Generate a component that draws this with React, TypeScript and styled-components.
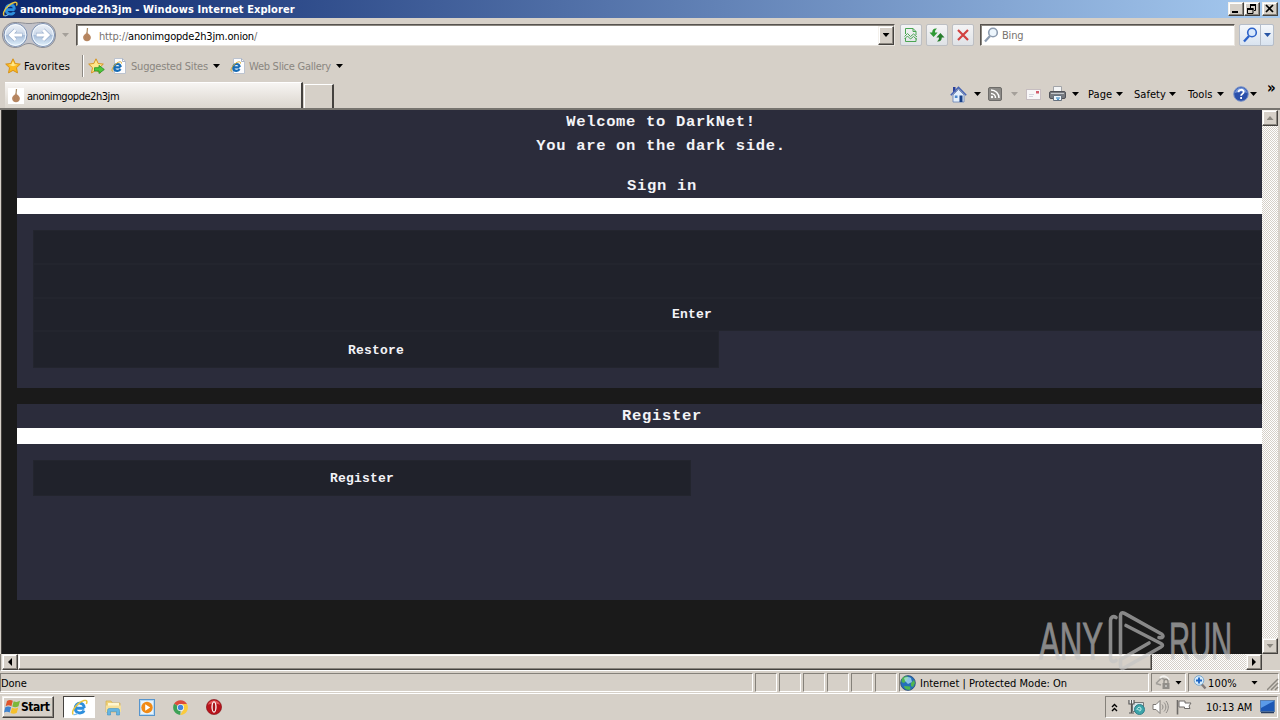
import React from 'react';
import styled, { createGlobalStyle, css } from 'styled-components';

const face = '#d6d0c8';
const uiFont = '"DejaVu Sans Condensed", "DejaVu Sans", "Liberation Sans", sans-serif';

const raised = css`
  border: 1px solid;
  border-color: #f4f1ec #45423f #45423f #f4f1ec;
  box-shadow: inset -1px -1px 0 #8b8780, inset 1px 1px 0 #fff;
`;

const sunken = css`
  border: 1px solid;
  border-color: #85817a #fff #fff #85817a;
`;

const IeIcon = ({ size = 16 }: { size?: number }) => (
  <svg width={size} height={size} viewBox="0 0 16 16" fill="none">
    <path d="M12.6 8.6H4.4M12.4 8.4C12.4 5.7 10.7 4 8.4 4 5.8 4 4 6 4 8.6c0 2.7 1.8 4.5 4.4 4.5 1.9 0 3.3-.9 3.8-2.2" stroke="#2d8fdd" strokeWidth="2.8" />
    <path d="M5.4 6.5c.7-1.2 1.7-1.7 2.9-1.7" stroke="#9bd6fa" strokeWidth="1" />
    <path d="M2.3 14.6C.2 13 2.6 8 7 4.300 10.800 1.200 14.500.500 14.900 2.200c.2.700 0 1.600-.5 2.500" stroke="#e9c43e" strokeWidth="1.400" />
    <path d="M2.3 14.6c.9.500 2.500-.1 4.100-1.100" stroke="#7cbcf0" strokeWidth="1.200" />
  </svg>
);

const IePageIcon = () => (
  <svg width="16" height="16" viewBox="0 0 16 16" fill="none">
    <path d="M3.500.500h8l3 3v12h-11z" fill="#fdfdff" stroke="#bcc3cf" />
    <path d="M11.500.500v3h3" stroke="#a9b3c4" />
    <path d="M9.500 9.300H3.300M9.700 9C9.500 6.800 8.200 6 6.500 6 4.700 6 3.200 7.500 3.200 9.400c0 2 1.400 3.400 3.300 3.400 1.400 0 2.500-.6 3-1.700" stroke="#176cb5" strokeWidth="2.200" />
    <path d="M1.500 13.500C-.2 12 2.500 7.500 6 5c2.500-1.700 5-1.700 4.500.5" stroke="#d9a927" />
  </svg>
);

const OnionIcon = () => (
  <svg width="16" height="16" viewBox="0 0 16 16">
    <rect width="16" height="16" fill="#fff" />
    <path d="M8.500 1 8 6" stroke="#a68a63" strokeWidth="1.200" />
    <path d="M8 5c.6 1.600 3.900 2.600 3.900 5.600 0 2.200-1.700 3.700-3.900 3.700s-3.900-1.500-3.900-3.700C4.100 7.600 7.400 6.600 8 5Z" fill="#b98a66" />
    <path d="M6.300 8.500v4.500M8 7v7M9.800 8.500v4.500" stroke="#a8764f" strokeWidth=".5" />
  </svg>
);

const StarIcon = ({ add }: { add?: boolean }) => (
  <svg width="17" height="16" viewBox="0 0 17 16">
    <path d="m8 .8 2.200 4.700 5.100.6-3.800 3.600 1 5.200L8 12.400l-4.500 2.500 1-5.200L.7 6.100l5.100-.6z" fill={add ? '#fbe58c' : '#fcb91f'} stroke="#d48c12" strokeWidth=".9" />
    <path d="m8 2.900 1.500 3.300 3.200.5-4.700 1.500-4.500-1.500 3-.5z" fill="#ffe88a" />
    {add && <path d="M6.500 9.700h4.500V7.400l5.300 4.100-5.300 4V13H6.500z" fill="#4fc73c" stroke="#238f22" strokeWidth=".8" />}
  </svg>
);

const NavIcon = () => (
  <svg width="58" height="30" viewBox="0 0 58 30" fill="none">
    <defs>
      <linearGradient id="orb" x1="0" y1="0" x2="0" y2="1">
        <stop offset="0" stopColor="#eef2f8" />
        <stop offset=".48" stopColor="#cbd8e9" />
        <stop offset=".52" stopColor="#a9bfdb" />
        <stop offset="1" stopColor="#e4f3fd" />
      </linearGradient>
    </defs>
    <path d="M15 2.500c8 0 8 1 14 1s6-1 14-1c7 0 12.500 5 12.500 12.500S50 27.500 43 27.500c-7 0-8-4-14-4s-7 4-14 4C8 27.500 2.500 22 2.500 15S8 2.500 15 2.500Z" fill="#c3c3c9" stroke="#8c8e96" />
    <circle cx="15.500" cy="15" r="11.500" fill="url(#orb)" stroke="#7d91b2" />
    <circle cx="43" cy="15" r="11.500" fill="url(#orb)" stroke="#7d91b2" />
    <circle cx="15.500" cy="15" r="10.300" stroke="#f4faff" />
    <circle cx="43" cy="15" r="10.300" stroke="#f4faff" />
    <path d="M22.500 15h-12M15.500 10l-5 5 5 5" stroke="#9aafcc" strokeWidth="4.300" />
    <path d="M22 15H10.500M15.500 10l-5 5 5 5" stroke="#fff" strokeWidth="3" />
    <path d="M36 15h12M43 10l5 5-5 5" stroke="#9aafcc" strokeWidth="4.300" />
    <path d="M36.500 15H48M43 10l5 5-5 5" stroke="#fff" strokeWidth="3" />
  </svg>
);

const SearchIcon = ({ color, glass }: { color: string; glass: string }) => (
  <svg width="15" height="16" viewBox="0 0 15 16" fill="none">
    <path d="m6 9-5 5.500" stroke={color} strokeWidth="2.300" />
    <circle cx="9" cy="5.500" r="4.300" fill={glass} stroke={color} strokeWidth="1.600" />
  </svg>
);

const CompatIcon = () => (
  <svg width="14" height="16" viewBox="0 0 14 16" fill="none" stroke="#4ba552">
    <path d="M1.500 7V1.500h7.500l3 3V8M9 1.500v3h3M1.500 11v3.500h10.500V11" />
    <path d="m.5 9.500 3-3 3 3 3-2.500 3.500 3M.5 12l3-3 3 3 3-2.500 3.500 3" />
  </svg>
);

const RefreshIcon = () => (
  <svg width="16" height="16" viewBox="0 0 16 16" fill="#2f9a35">
    <path d="M8 1.500C5 1 3.200 2.500 3.200 5.500H.5L4.600 10l4-4.500H6C6 3.800 6.500 2.700 8 1.500Z" />
    <path d="M8 14.500c3 .5 4.800-1 4.800-4h2.700L11.400 6l-4 4.500H10c0 1.700-.5 2.800-2 4Z" fill="#277d2c" />
  </svg>
);

const StopIcon = () => (
  <svg width="12" height="12" viewBox="0 0 12 12">
    <path d="m1 1 10 10M11 1 1 11" stroke="#d2413f" strokeWidth="2.200" />
  </svg>
);

const HomeIcon = () => (
  <svg width="17" height="17" viewBox="0 0 17 17">
    <path d="M3 1h2.500v5H3z" fill="#2a3f9a" />
    <path d="m3 9 5.500-5.500L14 9v7H3z" fill="#e3effc" stroke="#6480b4" strokeWidth=".8" />
    <path d="m.8 9.200 7.700-7.700 7.700 7.700" fill="none" stroke="#4664b4" strokeWidth="1.600" />
    <path d="M9.500 9.500h3V16h-3z" fill="#173f88" />
    <path d="M4.800 9.500h2.700V12H4.800z" fill="#4b87cc" />
  </svg>
);

const RssIcon = () => (
  <svg width="14" height="14" viewBox="0 0 14 14" fill="none">
    <rect x=".5" y=".5" width="13" height="13" rx="1.500" fill="#8c8a87" stroke="#6e6c69" />
    <path d="M3 6.500A4.500 4.500 0 0 1 7.500 11M3 3a8 8 0 0 1 8 8" stroke="#fff" strokeWidth="1.500" />
    <circle cx="4" cy="10" r="1.200" fill="#fff" />
  </svg>
);

const MailIcon = () => (
  <svg width="15" height="11" viewBox="0 0 15 11">
    <rect x=".5" y=".5" width="14" height="10" fill="#f8f7f8" stroke="#c6bdc0" />
    <path d="M10 2h3v2.500h-3z" fill="#d25c6c" />
    <path d="M3 5.500h5M3 7.500h4" stroke="#d3d3dc" />
  </svg>
);

const PrinterIcon = () => (
  <svg width="17" height="16" viewBox="0 0 17 16">
    <path d="M4.500.500h8v6h-8z" fill="#f4f5f6" stroke="#a2a4a8" />
    <rect x=".5" y="5.500" width="16" height="7" rx="1.500" fill="#787b80" stroke="#505258" />
    <path d="M2 7.500h13" stroke="#c4c7cb" />
    <path d="M4.500 9.500h8v5h-8z" fill="#eef5fa" stroke="#66717e" />
    <path d="M7 12h4M8 13.300h2" stroke="#2a7ebd" />
  </svg>
);

const HelpIcon = () => (
  <svg width="16" height="16" viewBox="0 0 16 16" fill="none">
    <circle cx="8" cy="8" r="7.300" fill="#2b50ab" stroke="#7d95c9" />
    <path d="M2 7c.5-7 11.500-7 12 0-4-2-8-2-12 0Z" fill="#6f92d8" />
    <path d="M5.500 6.200C5.500 3 10.700 3 10.700 6c0 1.800-2.600 2-2.600 3.800M8.100 11v2" stroke="#fff" strokeWidth="1.800" />
  </svg>
);

const GlobeIcon = () => (
  <svg width="16" height="16" viewBox="0 0 16 16">
    <circle cx="8" cy="8" r="7.400" fill="#2470ba" stroke="#27406b" strokeWidth=".7" />
    <path d="M2 3.500C4 1 7 .800 8.500 2L7 5 4 8 1.500 7zM11 8l3-3 1 3-2 4-2-1zM4 11l6 .5.500 3C6 15.500 4.500 13.500 4 11Z" fill="#4fb650" />
    <path d="M4 3c2-1.500 5-1.500 7 0l1 4-4 2-3-3z" fill="#b8e6fa" opacity=".7" />
  </svg>
);

const LockIcon = () => (
  <svg width="16" height="15" viewBox="0 0 16 15" fill="none">
    <path d="M1 8.500 6.500 3l3 1.500M1 8.500l5 1.500" stroke="#a09d98" strokeWidth="1.500" />
    <path d="M5 3c3-3 7-2 9 2" stroke="#f3f2ef" strokeWidth="2" />
    <path d="M9 8V6.500c0-3 4-3 4 0V8" stroke="#8e8b86" strokeWidth="1.300" />
    <rect x="7.500" y="8" width="7" height="6" fill="#918e89" />
    <path d="M11 10v2" stroke="#eee" />
  </svg>
);

const ZoomIcon = () => (
  <svg width="14" height="15" viewBox="0 0 14 15" fill="none">
    <path d="m8.500 9 4 4.500" stroke="#827a7a" strokeWidth="2.400" />
    <circle cx="6" cy="5.500" r="4.800" fill="#d7ecfb" stroke="#7aa7cd" />
    <path d="M6 2.500v6M3 5.500h6" stroke="#1b63c4" strokeWidth="1.800" />
  </svg>
);

const FlagLogo = () => (
  <svg width="17" height="16" viewBox="0 0 17 16">
    <path d="M3 2c2-1.500 4-1.300 5.800-.2L7.400 7.200C5.500 6 3.600 6 1.600 7.200z" fill="#e0542a" />
    <path d="M9.700 2.200c2 1 4 1 6.300-.4l-1.500 5.500c-2 1.300-4 1.400-6.200.300z" fill="#7cb83b" />
    <path d="M1.300 8.200c2-1.200 4-1 5.800.1l-1.400 5.300C4 12.500 2 12.500 0 13.500z" fill="#3f83cf" />
    <path d="M8 8.700c2 1 4 1 6.200-.3l-1.400 5.400c-2 1.300-4.200 1.300-6.300.200z" fill="#f5c02c" />
  </svg>
);

const FolderIcon = () => (
  <svg width="17" height="17" viewBox="0 0 17 17">
    <path d="M1 2h5l1.500 2H15v9H1z" fill="#efd178" stroke="#d3b050" strokeWidth=".7" />
    <path d="M3 4h11v5H3z" fill="#fff6cf" />
    <path d="M1 6.500h15V13H1z" fill="#f6e09a" />
    <path d="M2.500 16v-4.500c0-1.500 1-2 2-2h8c1 0 2 .5 2 2V16h-3v-3.500h-6V16z" fill="#65b5e2" stroke="#4292c2" strokeWidth=".6" />
  </svg>
);

const PlayerIcon = () => (
  <svg width="16" height="17" viewBox="0 0 16 17">
    <rect x=".5" y=".5" width="15" height="16" fill="#b7d9f4" stroke="#5795cd" />
    <rect x="2" y="2" width="12" height="13" fill="#e7f3fc" />
    <circle cx="8" cy="8.500" r="5.700" fill="#f18a15" />
    <path d="m6.200 5.300 5 3.200-5 3.200z" fill="#fff" />
  </svg>
);

const ChromeIcon = () => (
  <svg width="15" height="15" viewBox="0 0 15 15">
    <path d="M7.500 7.500 1.100 3.800A7.400 7.400 0 0 1 14 4H7.500z" fill="#dd4b3b" />
    <path d="M7.500 7.500 7.300 14.900A7.400 7.400 0 0 1 1.100 3.800z" fill="#3da155" />
    <path d="M7.500 4H14a7.400 7.400 0 0 1-6.700 10.900l3.200-5.700z" fill="#fbcb3c" />
    <circle cx="7.500" cy="7.500" r="3.500" fill="#f3f6f8" />
    <circle cx="7.500" cy="7.500" r="2.700" fill="#4285dd" />
  </svg>
);

const OperaIcon = () => (
  <svg width="16" height="16" viewBox="0 0 16 16">
    <circle cx="8" cy="8" r="7.600" fill="#b8141c" stroke="#7f0c12" strokeWidth=".6" />
    <path d="M2 6C3 0 13 0 14 6c-3-2-9-2-12 0Z" fill="#e2585a" />
    <ellipse cx="8" cy="8" rx="2.600" ry="5.800" fill="#fff" />
    <ellipse cx="8" cy="8" rx="1.300" ry="4.600" fill="#a8151b" />
  </svg>
);

const NetworkIcon = () => (
  <svg width="17" height="16" viewBox="0 0 17 16">
    <path d="M4.500 3.500h11v9h-11z" fill="#d5e4e8" stroke="#777" />
    <path d="M1 1v4h5V1M3.500 1v13M1 14h5" stroke="#555" strokeWidth="1.200" fill="#fff" />
    <circle cx="11.500" cy="10.500" r="5" fill="#3ca5a9" stroke="#347f8c" />
    <path d="M9 11c0-3 4-4 4-1s-3 2-2 0" stroke="#d2f5f3" fill="none" />
  </svg>
);

const SpeakerIcon = () => (
  <svg width="17" height="16" viewBox="0 0 17 16" fill="none">
    <path d="M1 5.500h3l4-4v13l-4-4H1z" fill="#fff" stroke="#7c7975" />
    <path d="M10 5.500c1.300 1.500 1.300 3.500 0 5M12 3.500c2.500 2.500 2.500 6.500 0 9M14 2c3 3.500 3 8.500 0 12" stroke="#8c8985" />
  </svg>
);

const ActionIcon = () => (
  <svg width="16" height="16" viewBox="0 0 16 16">
    <path d="M1.500 1v14.500" stroke="#6e6b68" strokeWidth="1.600" />
    <path d="M3 2h6v2h6l-2 3 1 2.500H8.500V8H3z" fill="#fff" stroke="#6e6b68" />
  </svg>
);

const DesktopIcon = () => (
  <svg width="15" height="14" viewBox="0 0 15 14">
    <rect x=".5" y=".5" width="14" height="11" fill="#1d58b5" stroke="#5b7fae" />
    <path d="M1 1h13L1 8z" fill="#5b9be8" />
    <path d="M1 12.500h13" stroke="#253c62" strokeWidth="1.500" />
  </svg>
);

const Watermark = () => (
  <WatermarkLayer>
    <svg width="220" height="64" viewBox="0 0 220 64" fill="none">
      <g fill="#c4c4c4" stroke="#c4c4c4" strokeWidth=".9" fontFamily="Liberation Sans, sans-serif" fontSize="52">
        <text transform="translate(3 50) scale(.6 1)">ANY</text>
        <text transform="translate(133 50) scale(.56 1)">RUN</text>
      </g>
      <g stroke="#c4c4c4" strokeWidth="3.600" strokeLinecap="round" strokeLinejoin="round">
        <path d="M80 8.500c-3-2-5.500 0-5.500 3V49c0 3 2.500 4.500 5.500 2.500" />
        <path d="M84.500 45V7c0-3 1.500-4 4-2.600l37 20.600c3 2 1 4.500-2.500 3.500" />
        <path d="m90 16.500 35 18c2 1.200 2 2.500 0 3.500L88 59c-2 1.200-3.500 0-3.500-2.500v-6L113 34" />
      </g>
    </svg>
  </WatermarkLayer>
);

const tools = [
  { label: 'Page', width: 26, gap: 9 },
  { label: 'Safety', width: 33, gap: 11 },
  { label: 'Tools', width: 27, gap: 12 },
];

const App: React.FC = () => (
  <Screen>
    <GlobalStyle />
    <TitleBar>
      <IeIcon size={16} />
      <Title>anonimgopde2h3jm - Windows Internet Explorer</Title>
      <CaptionButton>
        <svg width="12" height="10"><path d="M2 8h6" stroke="#000" strokeWidth="2" /></svg>
      </CaptionButton>
      <CaptionButton>
        <svg width="12" height="11" fill="none" stroke="#000">
          <path d="M4 1.500h6M4.500 1v3M9.500 1v5.500H8M1.500 5.500v4h5.500v-4M1 5h6.500" />
          <path d="M4 1h6M1 5h6.500" strokeWidth="2" />
        </svg>
      </CaptionButton>
      <CaptionButton $gap={2}>
        <svg width="12" height="10"><path d="m2 1 7 7M9 1 2 8" stroke="#000" strokeWidth="1.700" /></svg>
      </CaptionButton>
    </TitleBar>

    <NavRow>
      <NavIcon />
      <Caret $gap={4} $light />
      <AddressBar>
        <OnionIcon />
        <Url><span>http://</span>anonimgopde2h3jm.onion<span>/</span></Url>
        <DropButton><Caret /></DropButton>
      </AddressBar>
      <NavButton><CompatIcon /></NavButton>
      <NavButton><RefreshIcon /></NavButton>
      <NavButton><StopIcon /></NavButton>
      <SearchBox>
        <SearchIcon color="#8d9cb0" glass="#edf6fd" />
        <Label $color="#77736f" $gap={3}>Bing</Label>
      </SearchBox>
      <GoButton>
        <GoMain><SearchIcon color="#2c62c9" glass="#d9e9fc" /></GoMain>
        <Caret $color="#2755a5" $gap={3} />
      </GoButton>
    </NavRow>

    <FavoritesRow>
      <StarIcon />
      <Label $gap={2} $width={47} $spacing={0.15}>Favorites</Label>
      <Separator />
      <StarIcon add />
      <Link $gap={6}><IePageIcon /><Label $gap={4} $width={79} $color="#8a8680">Suggested Sites</Label><Caret $gap={3} /></Link>
      <Link $gap={10}><IePageIcon /><Label $gap={3} $width={83} $color="#8a8680" $spacing={-0.26}>Web Slice Gallery</Label><Caret $gap={4} /></Link>
    </FavoritesRow>

    <TabRow>
      <Tab>
        <OnionIcon />
        <Label $gap={3} $spacing={-0.45}>anonimgopde2h3jm</Label>
      </Tab>
      <NewTab />
      <CommandBar>
        <HomeIcon /><Caret $gap={7} />
        <Slot $gap={7}><RssIcon /></Slot><Caret $gap={9} $light />
        <Slot $gap={8}><MailIcon /></Slot>
        <Slot $gap={8}><PrinterIcon /></Slot><Caret $gap={6} />
        {tools.map((tool) => (
          <React.Fragment key={tool.label}>
            <Label $gap={tool.gap} $width={tool.width} $spacing={0.05}>{tool.label}</Label>
            <Caret $gap={2} />
          </React.Fragment>
        ))}
        <Slot $gap={9}><HelpIcon /></Slot><Caret $gap={1} />
        <More>»</More>
      </CommandBar>
    </TabRow>

    <Viewport>
      <Page>
        <Section>
          <Heading>Welcome to DarkNet!</Heading>
          <Heading>You are on the dark side.</Heading>
          <Heading $gap={16} $shift={2}>Sign in</Heading>
          <Rule />
          <Form $height={174}>
            <Field />
            <Field />
            <Submit>Enter</Submit>
            <FormButton $width={686} $height={37}>Restore</FormButton>
          </Form>
        </Section>
        <Section>
          <Heading $shift={2}>Register</Heading>
          <Rule />
          <Form $height={156}>
            <FormButton $width={658} $height={36}>Register</FormButton>
          </Form>
        </Section>
      </Page>
      <VerticalBar>
        <ScrollButton><Arrow $dir="up" $disabled /></ScrollButton>
        <ScrollButton><Arrow $dir="down" $disabled /></ScrollButton>
      </VerticalBar>
    </Viewport>
    <HorizontalBar>
      <ScrollButton><Arrow $dir="left" /></ScrollButton>
      <Thumb />
      <Track />
      <ScrollButton><Arrow $dir="right" /></ScrollButton>
      <Corner />
    </HorizontalBar>

    <StatusBar>
      <Pane $width={753}><Label $spacing={-0.1}>Done</Label></Pane>
      {[0, 1, 2, 3, 4, 5].map((n) => <Pane key={n} $width={22} />)}
      <Pane $width={250}><GlobeIcon /><Label $gap={4} $spacing={0.01}>Internet | Protected Mode: On</Label></Pane>
      <Pane $width={35}><Slot $gap={3}><LockIcon /></Slot><Caret $gap={4} /></Pane>
      <Pane $width={91}>
        <Slot $gap={4}><ZoomIcon /></Slot>
        <Label $gap={1} $width={42} $spacing={0.15}>100%</Label>
        <Caret $gap={1} />
        <Grip width="12" height="16" viewBox="0 0 12 16" stroke="#8c8881" strokeWidth="1.500">
          <path d="M0 15 11 4M4 15l7-7M8 15l3-3" />
        </Grip>
      </Pane>
    </StatusBar>

    <Taskbar>
      <StartButton><FlagLogo />Start</StartButton>
      <ActiveTask><IeIcon size={17} /></ActiveTask>
      <Slot $gap={10}><FolderIcon /></Slot>
      <Slot $gap={17}><PlayerIcon /></Slot>
      <Slot $gap={18}><ChromeIcon /></Slot>
      <Slot $gap={18}><OperaIcon /></Slot>
      <Tray>
        <svg width="7" height="9" fill="none" stroke="#000" strokeWidth="1.400"><path d="m1 4 2.500-2.500L6 4M1 8l2.500-2.500L6 8" /></svg>
        <Slot $gap={10}><NetworkIcon /></Slot>
        <Slot $gap={7}><SpeakerIcon /></Slot>
        <Slot $gap={7}><ActionIcon /></Slot>
        <Label $gap={14} $width={48} $spacing={-0.08}>10:13 AM</Label>
        <Slot $gap={6}><DesktopIcon /></Slot>
      </Tray>
    </Taskbar>
    <Watermark />
  </Screen>
);

const GlobalStyle = createGlobalStyle`
  * { box-sizing: border-box; }
  body { margin: 0; overflow: hidden; }
  svg { display: block; flex: none; }
`;

const Screen = styled.div`
  position: relative;
  display: flex;
  flex-direction: column;
  width: 1280px;
  height: 720px;
  overflow: hidden;
  background: ${face};
  font-family: ${uiFont};
  font-size: 11px;
  color: #000;
`;

const TitleBar = styled.div`
  display: flex;
  align-items: center;
  height: 18px;
  padding: 0 2px;
  background: linear-gradient(90deg, #0b266c, #a6caf0);
`;

const Title = styled.div`
  flex: 1;
  margin-left: 2px;
  font-weight: bold;
  letter-spacing: 0.08px;
  color: #fff;
  white-space: nowrap;
`;

const CaptionButton = styled.div<{ $gap?: number }>`
  ${raised}
  display: flex;
  align-items: center;
  justify-content: center;
  width: 16px;
  height: 14px;
  margin-left: ${({ $gap = 0 }) => $gap}px;
  background: ${face};
`;

const Label = styled.span<{ $gap?: number; $width?: number; $color?: string; $spacing?: number }>`
  flex: none;
  width: ${({ $width }) => ($width ? `${$width}px` : 'auto')};
  margin-left: ${({ $gap = 0 }) => $gap}px;
  padding-top: 2px;
  color: ${({ $color }) => $color || '#000'};
  letter-spacing: ${({ $spacing = -0.2 }) => $spacing}px;
  line-height: 14px;
  white-space: nowrap;
`;

const Slot = styled.div<{ $gap: number }>`
  flex: none;
  margin-left: ${({ $gap }) => $gap}px;
`;

const Caret = styled.i<{ $gap?: number; $color?: string; $light?: boolean }>`
  flex: none;
  width: 7px;
  height: 4px;
  margin-left: ${({ $gap = 0 }) => $gap}px;
  background: ${({ $color, $light }) => ($light ? '#a5a09a' : $color || '#000')};
  clip-path: polygon(0 0, 100% 0, 50% 100%);
`;

const NavRow = styled.div`
  display: flex;
  align-items: center;
  height: 34px;
`;

const AddressBar = styled.div`
  display: flex;
  align-items: center;
  width: 819px;
  height: 22px;
  margin: 0 5px 0 7px;
  padding-left: 2px;
  background: #fff;
  border: 1px solid;
  border-color: #57534f #e9e5df #e9e5df #57534f;
  box-shadow: inset 1px 1px 0 #8b8780;
`;

const Url = styled.div`
  flex: 1;
  margin-left: 4px;
  padding-top: 2px;
  letter-spacing: -0.18px;

  span {
    color: #77736f;
  }
`;

const DropButton = styled.div`
  ${raised}
  display: flex;
  align-items: center;
  justify-content: center;
  width: 16px;
  height: 19px;
  background: ${face};
`;

const NavButton = styled.div`
  display: flex;
  align-items: center;
  justify-content: center;
  width: 22px;
  height: 22px;
  margin-right: 4px;
  background: linear-gradient(#f4f4f5, #dfe2e6);
  border: 1px solid #bdbfc3;
  border-radius: 2px;
`;

const SearchBox = styled.div`
  display: flex;
  align-items: center;
  width: 255px;
  height: 22px;
  margin-left: 2px;
  padding-left: 3px;
  background: #fff;
  border: 1px solid;
  border-color: #57534f #e9e5df #e9e5df #57534f;
  box-shadow: inset 1px 1px 0 #8b8780;
`;

const GoButton = styled.div`
  display: flex;
  align-items: center;
  width: 35px;
  height: 22px;
  margin-left: 4px;
  background: linear-gradient(#f4f7fb, #d9e3ef);
  border: 1px solid #b5bdc9;
  border-radius: 2px;
`;

const GoMain = styled.div`
  display: flex;
  align-items: center;
  justify-content: center;
  width: 21px;
  height: 20px;
  border-right: 1px solid #b5bdc9;
`;

const FavoritesRow = styled.div`
  display: flex;
  align-items: center;
  height: 30px;
  padding: 0 0 2px 5px;
`;

const Separator = styled.div`
  width: 2px;
  height: 22px;
  margin: 0 4px 0 11px;
  border-left: 1px solid #8d8983;
  border-right: 1px solid #fff;
`;

const Link = styled.div<{ $gap: number }>`
  display: flex;
  align-items: center;
  margin-left: ${({ $gap }) => $gap}px;
`;

const TabRow = styled.div`
  display: flex;
  height: 28px;
  padding-left: 5px;
  border-bottom: 2px solid #77746f;
`;

const Tab = styled.div`
  display: flex;
  align-items: center;
  width: 298px;
  height: 26px;
  padding-left: 3px;
  background: linear-gradient(#f7f5f3, #e6e2dc 60%, #dcd7cf);
  border-top: 1px solid #fff;
  border-right: 2px solid #45423f;
`;

const NewTab = styled.div`
  width: 30px;
  height: 24px;
  margin: 2px 0 0 1px;
  border: solid #fff;
  border-width: 1px 0 0 1px;
  border-right: 2px solid #45423f;
`;

const CommandBar = styled.div`
  display: flex;
  align-items: center;
  height: 24px;
  margin-left: auto;
  padding-right: 3px;
`;

const More = styled.span`
  width: 10px;
  height: 24px;
  margin-left: 10px;
  font-size: 15px;
  font-weight: bold;
  line-height: 12px;
`;

const Viewport = styled.div`
  display: flex;
  height: 544px;
  padding: 0 2px 0 1px;
`;

const Page = styled.div`
  display: flex;
  flex-direction: column;
  gap: 16px;
  width: 1261px;
  padding-left: 15px;
  overflow: hidden;
  background: #1a1a1a;
  border-left: 1px solid #45423f;
  font-family: "Liberation Mono", "Courier New", monospace;
  font-weight: bold;
  color: #f3f3f7;
`;

const Section = styled.div`
  flex: none;
  background: #2b2c3b;
`;

const Heading = styled.div<{ $gap?: number; $shift?: number }>`
  width: 1288px;
  height: ${({ $gap = 0 }) => 24 + $gap}px;
  padding-top: ${({ $gap = 0 }) => $gap}px;
  padding-left: ${({ $shift = 0 }) => $shift}px;
  font-size: 15.5px;
  letter-spacing: 0.67px;
  line-height: 25px;
  text-align: center;
`;

const Rule = styled.div`
  height: 16px;
  background: #fff;
`;

const Form = styled.div<{ $height: number }>`
  display: flex;
  flex-direction: column;
  width: 1350px;
  height: ${({ $height }) => $height}px;
  padding: 16px;
`;

const Field = styled.div`
  flex: none;
  height: 34px;
  background: #20222b;
  border: 1px solid #23252e;
`;

const Submit = styled(Field)`
  height: 33px;
  font-size: 13px;
  letter-spacing: 0.2px;
  line-height: 32px;
  text-align: center;
`;

const FormButton = styled(Field)<{ $width: number; $height: number }>`
  width: ${({ $width }) => $width}px;
  height: ${({ $height }) => $height}px;
  font-size: 13px;
  letter-spacing: 0.2px;
  line-height: ${({ $height }) => $height}px;
  text-align: center;
`;

const dither = css`
  background: repeating-conic-gradient(#fff 0 25%, ${face} 0 50%) 0 0 / 2px 2px;
`;

const VerticalBar = styled.div`
  ${dither}
  display: flex;
  flex-direction: column;
  justify-content: space-between;
  width: 16px;
`;

const ScrollButton = styled.div`
  ${raised}
  display: flex;
  flex: none;
  align-items: center;
  justify-content: center;
  width: 16px;
  height: 16px;
  background: ${face};
`;

const shapes = {
  up: 'polygon(50% 0, 100% 100%, 0 100%)',
  down: 'polygon(0 0, 100% 0, 50% 100%)',
  left: 'polygon(0 50%, 100% 0, 100% 100%)',
  right: 'polygon(0 0, 100% 50%, 0 100%)',
};

const Arrow = styled.i<{ $dir: keyof typeof shapes; $disabled?: boolean }>`
  width: ${({ $dir }) => ($dir === 'left' || $dir === 'right' ? 4 : 7)}px;
  height: ${({ $dir }) => ($dir === 'left' || $dir === 'right' ? 8 : 4)}px;
  background: ${({ $disabled }) => ($disabled ? '#8b8780' : '#000')};
  clip-path: ${({ $dir }) => shapes[$dir]};
`;

const HorizontalBar = styled.div`
  display: flex;
  height: 17px;
  padding: 0 2px 1px 1px;
  border-left: 1px solid #85817a;
  border-bottom: 1px solid #fff;
`;

const Thumb = styled.div`
  ${raised}
  width: 1134px;
  height: 16px;
  background: ${face};
`;

const Track = styled.div`
  ${dither}
  flex: 1;
  height: 16px;
`;

const Corner = styled.div`
  width: 16px;
`;

const StatusBar = styled.div`
  display: flex;
  gap: 2px;
  height: 22px;
  padding: 2px 0 1px;
`;

const Pane = styled.div<{ $width: number }>`
  ${sunken}
  display: flex;
  flex: none;
  align-items: center;
  width: ${({ $width }) => $width}px;
  height: 19px;
`;

const Grip = styled.svg`
  margin-left: 9px;
`;

const Taskbar = styled.div`
  display: flex;
  align-items: center;
  height: 27px;
  padding: 0 2px;
  border-top: 1px solid #fff;
`;

const StartButton = styled.div`
  ${raised}
  display: flex;
  align-items: center;
  width: 52px;
  height: 22px;
  padding-left: 1px;
  font-size: 12px;
  font-weight: bold;
  letter-spacing: -0.45px;
`;

const ActiveTask = styled.div`
  display: flex;
  align-items: center;
  justify-content: center;
  width: 32px;
  height: 22px;
  margin-left: 9px;
  background: #fff;
  border: 1px solid;
  border-color: #45423f #fff #fff #45423f;
`;

const Tray = styled.div`
  ${sunken}
  display: flex;
  align-items: center;
  width: 173px;
  height: 22px;
  margin-left: auto;
  padding-left: 5px;
`;

const WatermarkLayer = styled.div`
  position: absolute;
  top: 609px;
  left: 1036px;
  opacity: 0.65;
  pointer-events: none;
`;

export default App;
